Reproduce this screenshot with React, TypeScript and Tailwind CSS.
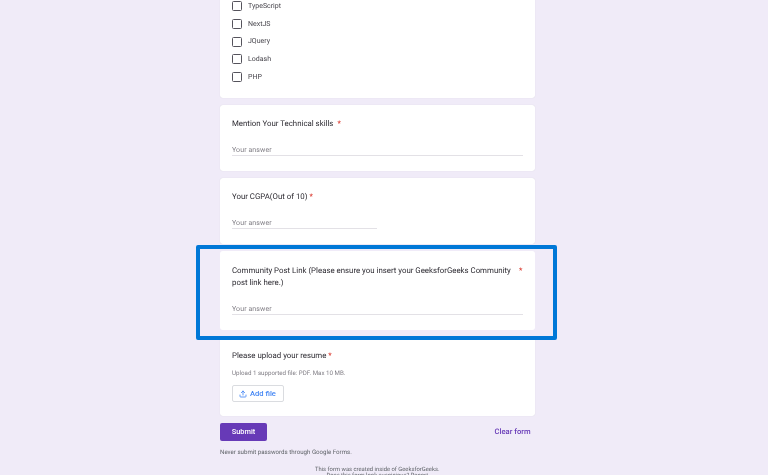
import { Upload } from 'lucide-react'

const options = ['TypeScript', 'NextJS', 'JQuery', 'Lodash', 'PHP']

function Question({ label, gap, short }: { label: string; gap: string; short?: boolean }) {
  return (
    <div className="h-[66px] rounded-[3px] bg-white px-3 pt-[13px] shadow-[0_0_1px_rgba(0,0,0,0.15)]">
      <p className="text-[7.85px] leading-[12px] text-[#2c2a31]">
        {label}
        <span className={`text-[#d93025] ${gap}`}>*</span>
      </p>
      <div className={`mt-[11px] h-[15px] border-b border-[#e3e1e6] pt-[4px] text-[7px] leading-[10px] tracking-[0.1px] text-[#807e85] ${short ? 'w-[145px]' : ''}`}>
        Your answer
      </div>
    </div>
  )
}

export default function App() {
  return (
    <div className="relative h-[475px] overflow-hidden bg-[#f0ebf8] font-['Roboto',sans-serif] [text-rendering:geometricPrecision]">
      <div className="mx-auto flex w-[315px] translate-x-[-7px] flex-col gap-[7px] pl-[0.5px] blur-[0.3px]">
        {/* checkbox card, cut off by the top of the window */}
        <div className="h-[98px] rounded-b-[3px] bg-white px-3 shadow-[0_0_1px_rgba(0,0,0,0.15)]">
          <div className="flex flex-col gap-[7.8px] pt-px">
            {options.map(o => (
              <div key={o} className="flex h-[10px] items-center gap-[6px]">
                <span className="h-[10px] w-[10px] rounded-[1.5px] border-[1.5px] border-[#55535c]" />
                <span className="text-[7px] text-[#46444b]">{o}</span>
              </div>
            ))}
          </div>
        </div>

        <Question label="Mention Your Technical skills" gap="ml-[4px]" />
        <Question label="Your CGPA(Out of 10)" gap="ml-[2px]" short />

        <div className="h-[79px] rounded-[3px] bg-white pl-3 pr-3 pt-[14px]">
          <div className="flex justify-between text-[7.85px] leading-[12px] text-[#2c2a31]">
            <p className="w-[284px] shrink-0">Community Post Link (Please ensure you insert your GeeksforGeeks Community post link here.)</p>
            <span className="text-[#d93025]">*</span>
          </div>
          <div className="mt-[11px] h-[15px] border-b border-[#e3e1e6] pt-[4px] text-[7px] leading-[10px] tracking-[0.1px] text-[#807e85]">
            Your answer
          </div>
        </div>

        <div className="h-[79px] rounded-[3px] bg-white px-3 pt-[13px] shadow-[0_0_1px_rgba(0,0,0,0.15)]">
          <p className="text-[7.85px] leading-[12px] text-[#2c2a31]">
            Please upload your resume <span className="text-[#d93025]">*</span>
          </p>
          <p className="mt-[7px] text-[6.2px] leading-[9px] text-[#807e85]">Upload 1 supported file: PDF. Max 10 MB.</p>
          <button className="mt-[7px] flex h-[17px] w-[52px] items-center gap-[3px] rounded-[2px] border border-[#dadce0] pl-[6px] text-[7.6px] font-medium text-[#4285f4]">
            <Upload className="h-[8px] w-[8px]" strokeWidth={2.5} />
            Add file
          </button>
        </div>

        <div className="flex items-center justify-between">
          <button className="h-[18px] w-[47px] rounded-[2px] bg-[#673ab7] text-[7.4px] font-medium text-white">Submit</button>
          <span className="pr-[4px] text-[7.6px] font-medium text-[#673ab7]">Clear form</span>
        </div>

        <p className="text-[6.15px] leading-[9px] text-[#5f6368]">Never submit passwords through Google Forms.</p>
        <div className="mt-[3px] text-center text-[5.85px] leading-[6px] text-[#5f6368]">
          <p>This form was created inside of GeeksforGeeks.</p>
          <p>Does this form look suspicious? Report</p>
        </div>
      </div>

      {/* highlight frame drawn over the screenshot */}
      <div className="absolute left-[196px] top-[245px] h-[95px] w-[361px] rounded-[2px] border-[4px] border-[#0078d7]" />
    </div>
  )
}
